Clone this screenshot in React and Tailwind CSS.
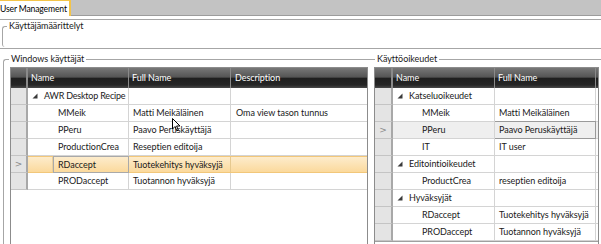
import React from "react";

const HEAD =
  "h-[20px] bg-[linear-gradient(to_bottom,#777_0%,#555_45%,#1f1f1f_52%,#262626_85%,#4a4a4a_100%)] text-white flex items-center";

function Tri() {
  return (
    <svg width="6" height="6" viewBox="0 0 6 6" className="shrink-0">
      <polygon points="5.5,0.5 5.5,5.5 0.5,5.5" fill="#3a3a3a" />
    </svg>
  );
}

function Sel({ mark, w = "w-[17px]" }) {
  return (
    <div className={w + " h-full shrink-0 bg-[#e4e4e4] border-r-2 border-b border-r-[#a8a8a8] border-b-[#c4c4c4] flex items-center justify-center text-[#8a8a8a] text-[9px] font-['DejaVu_Sans',sans-serif]"}>
      {mark ? ">" : ""}
    </div>
  );
}

function LeftGrid() {
  const rows = [
    { group: "AWR Desktop Recipe" },
    { n: "MMeik", f: "Matti Meikäläinen", d: "Oma view tason tunnus" },
    { n: "PPeru", f: "Paavo Peruskäyttäjä", d: "" },
    { n: "ProductionCrea", f: "Reseptien editoija", d: "" },
    { n: "RDaccept", f: "Tuotekehitys hyväksyjä", d: "", selected: true },
    { n: "PRODaccept", f: "Tuotannon hyväksyjä", d: "" },
  ];
  return (
    <div className="ml-[6px] mt-[2px] w-[358px] h-[200px] border-l border-r border-t border-[#8c8c8c] bg-white">
      <div className={HEAD}>
        <div className="w-[17px] h-full border-r-2 border-[#8a8a8a]" />
        <div className="w-[101px] h-full border-r border-[#8a8a8a] pl-[3px] flex items-center">Name</div>
        <div className="w-[102px] h-full border-r border-[#8a8a8a] pl-[3px] flex items-center">Full Name</div>
        <div className="flex-1 h-full pl-[4px] flex items-center">Description</div>
      </div>
      {rows.map((r, i) =>
        r.group ? (
          <div key={i} className="h-[17px] flex">
            <Sel />
            <div className="w-[101px] border-r border-b border-[#d4d4d4] flex items-center pl-[4px] gap-[6px]">
              <Tri />
              <span className="tracking-[-0.2px]">{r.group}</span>
            </div>
            <div className="w-[102px] border-r border-b border-[#d4d4d4]" />
            <div className="flex-1 border-b border-[#d4d4d4]" />
          </div>
        ) : r.selected ? (
          <div key={i} className="h-[17px] flex">
            <Sel mark />
            <div className="flex-1 flex bg-[linear-gradient(to_bottom,#fdeccc,#fbd99c)] border-t border-b border-[#f2c77a]">
              <div className="w-[25px] border-r border-[#e9cf9c]" />
              <div className="w-[76px] border border-[#a9a9a9] flex items-center pl-[4px] -mt-px -mb-px">{r.n}</div>
              <div className="w-[102px] border-r border-[#e6c98f] flex items-center pl-[4px]">{r.f}</div>
              <div className="flex-1" />
            </div>
          </div>
        ) : (
          <div key={i} className="h-[17px] flex">
            <Sel />
            <div className="w-[101px] border-r border-b border-[#d4d4d4] flex items-center pl-[30px]">{r.n}</div>
            <div className="w-[102px] border-r border-b border-[#d4d4d4] flex items-center pl-[4px]">{r.f}</div>
            <div className="flex-1 border-b border-[#d4d4d4] flex items-center pl-[5px]">{r.d}</div>
          </div>
        )
      )}
    </div>
  );
}

function RightGrid() {
  const rows = [
    { group: "Katseluoikeudet" },
    { n: "MMeik", f: "Matti Meikäläinen" },
    { n: "PPeru", f: "Paavo Peruskäyttäjä", current: true },
    { n: "IT", f: "IT user" },
    { group: "Editointioikeudet" },
    { n: "ProductCrea", f: "reseptien editoija" },
    { group: "Hyväksyjät" },
    { n: "RDaccept", f: "Tuotekehitys hyväksyjä" },
    { n: "PRODaccept", f: "Tuotannon hyväksyjä" },
  ];
  return (
    <div className="ml-[2px] mt-[2px] w-[225px] h-[200px] border-l border-r border-t border-[#8c8c8c] bg-white">
      <div className={HEAD}>
        <div className="w-[18px] h-full border-r-2 border-[#8a8a8a]" />
        <div className="w-[102px] h-full border-r border-[#8a8a8a] pl-[3px] flex items-center">Name</div>
        <div className="w-[101px] h-full border-r border-[#8a8a8a] pl-[3px] flex items-center">Full Name</div>
        <div className="flex-1 h-full" />
      </div>
      {rows.map((r, i) =>
        r.group ? (
          <div key={i} className="h-[17px] flex">
            <Sel w="w-[18px]" />
            <div className="w-[102px] border-r border-b border-[#d4d4d4] flex items-center pl-[4px] gap-[6px]">
              <Tri />
              <span>{r.group}</span>
            </div>
            <div className="w-[101px] border-r border-b border-[#d4d4d4]" />
            <div className="flex-1 border-b border-[#d4d4d4]" />
          </div>
        ) : (
          <div key={i} className={"h-[17px] flex " + (r.current ? "bg-[#efefef]" : "")}>
            <Sel w="w-[18px]" mark={r.current} />
            <div className="w-[102px] border-r border-b border-[#d4d4d4] flex items-center pl-[29px]">{r.n}</div>
            <div
              className={
                "w-[101px] border-r border-b flex items-center pl-[4px] " +
                (r.current ? "border-[#9a9a9a] border-t -mt-px h-[18px]" : "border-[#d4d4d4]")
              }
            >
              {r.f}
            </div>
            <div className="flex-1 border-b border-[#d4d4d4]" />
          </div>
        )
      )}
      <div className="border-t border-[#a0a0a0]" />
    </div>
  );
}

export default function App() {
  return (
    <div className="w-[601px] h-[244px] overflow-hidden relative bg-white text-[9px] leading-[12px] tracking-[-0.05px] whitespace-nowrap text-[#1a1a1a] font-['Lato',sans-serif]">
      {/* tab bar */}
      <div className="h-[16px] flex">
        <div className="h-[16px] w-[71px] bg-white border-t border-r-2 border-[#f3c44a] flex items-center text-[#000] overflow-hidden">
          <span className="text-[8.6px] tracking-[-0.15px]">User Management</span>
        </div>
        <div className="flex-1 h-[16px] bg-[#c3c3c3] border-b border-[#9c9c9c]" />
      </div>

      {/* top group */}
      <div className="mt-[3px] h-[30px] border-t border-b border-[#a6a6a6]">
        <fieldset className="ml-[2px] mt-[0px] w-[82px] h-[27px] border-l border-t border-b-0 border-[#a6a6a6] rounded-tl-[3px] rounded-bl-[3px]">
          <legend className="ml-[4px] px-[2px] leading-[12px]">Käyttäjämäärittelyt</legend>
        </fieldset>
      </div>

      {/* lower groups */}
      <div className="mt-[4px] flex">
        <fieldset className="ml-[3px] w-[369px] h-[200px] border-l border-t border-[#a6a6a6] rounded-tl-[3px]">
          <legend className="ml-[5px] px-[2px] leading-[12px]">Windows käyttäjät</legend>
          <LeftGrid />
        </fieldset>
        <fieldset className="w-[229px] h-[200px] border-t border-[#a6a6a6]">
          <legend className="ml-[3px] px-[2px] leading-[12px]">Käyttöoikeudet</legend>
          <RightGrid />
        </fieldset>
      </div>

      {/* mouse cursor */}
      <svg className="absolute left-[172px] top-[118px]" width="9" height="14" viewBox="0 0 9 14">
        <path d="M0.5 0.5 L0.5 11 L3 8.5 L4.8 12.8 L6.3 12.2 L4.6 8 L8 8 Z" fill="#fff" stroke="#000" strokeWidth="1" />
      </svg>
    </div>
  );
}
